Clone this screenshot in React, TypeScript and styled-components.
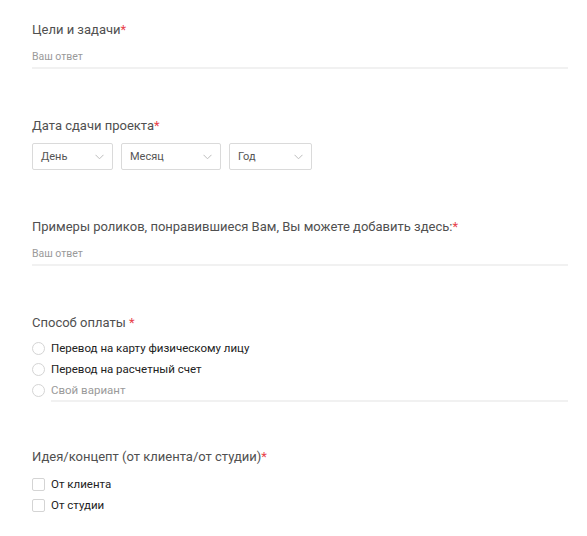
import React from "react";
import styled, {createGlobalStyle} from "styled-components";

const Global = createGlobalStyle`
  html, body {
    margin: 0;
    background: #fff;
  }
  body {
    font-family: Roboto, "Noto Sans", "Liberation Sans", sans-serif;
  }
`;

const Form = styled.div`
  padding: 20px 19px 0 32px;
`;

const Question = styled.div`
  margin-bottom: 47px;
  &:last-child {
    margin-bottom: 0;
  }
`;

const Label = styled.div<{ $gap?: number }>`
  font-size: 13px;
  line-height: 20px;
  color: #505050;
  margin-bottom: ${p => p.$gap ?? 7}px;
`;

const Star = styled.span`
  color: #e8424a;
`;

const TextLine = styled.div`
  font-size: 10.5px;
  line-height: 20px;
  height: 20px;
  color: #9a9a9a;
  border-bottom: 2px solid #f1f1f1;
`;

const SelectRow = styled.div`
  display: flex;
  gap: 8px;
`;

const Select = styled.div<{ $w: number }>`
  box-sizing: border-box;
  width: ${p => p.$w}px;
  height: 27px;
  border: 1px solid #dadada;
  border-radius: 2px;
  display: flex;
  align-items: center;
  justify-content: space-between;
  padding: 0 8px 0 8px;
  font-size: 11px;
  color: #555;
`;

const OptionList = styled.div`
  display: flex;
  flex-direction: column;
  gap: 1px;
`;

const Option = styled.div<{ $other?: boolean }>`
  display: flex;
  align-items: center;
  height: 20px;
  font-size: 11.5px;
  color: #222;
  ${p => p.$other && `
    color: #9a9a9a;
  `}
`;

const Radio = styled.span`
  box-sizing: border-box;
  width: 13px;
  height: 13px;
  border: 1px solid #d4d4d4;
  border-radius: 50%;
  margin-right: 6px;
  flex-shrink: 0;
`;

const Check = styled.span`
  box-sizing: border-box;
  width: 13px;
  height: 13px;
  border: 1px solid #d4d4d4;
  border-radius: 2px;
  margin-right: 6px;
  flex-shrink: 0;
`;

const OtherText = styled.div`
  flex: 1;
  line-height: 20px;
  border-bottom: 2px solid #f1f1f1;
  height: 20px;
  margin-top: 2px;
`;

function Chevron() {
    return <svg width="9" height="6" viewBox="0 0 9 6">
        <path d="M0.5 0.8 L4.5 4.8 L8.5 0.8" fill="none" stroke="#bdbdbd" strokeWidth="1"/>
    </svg>;
}

export default function App() {
    return (
        <Form>
            <Global/>
            <Question>
                <Label>Цели и задачи<Star>*</Star></Label>
                <TextLine>Ваш ответ</TextLine>
            </Question>
            <Question>
                <Label>Дата сдачи проекта<Star>*</Star></Label>
                <SelectRow>
                    <Select $w={81}>День<Chevron/></Select>
                    <Select $w={100}>Месяц<Chevron/></Select>
                    <Select $w={83}>Год<Chevron/></Select>
                </SelectRow>
            </Question>
            <Question>
                <Label>Примеры роликов, понравившиеся Вам, Вы можете добавить здесь:<Star>*</Star></Label>
                <TextLine>Ваш ответ</TextLine>
            </Question>
            <Question>
                <Label $gap={5}>Способ оплаты <Star>*</Star></Label>
                <OptionList>
                    <Option><Radio/>Перевод на карту физическому лицу</Option>
                    <Option><Radio/>Перевод на расчетный счет</Option>
                    <Option $other><Radio/><OtherText>Свой вариант</OtherText></Option>
                </OptionList>
            </Question>
            <Question>
                <Label>Идея/концепт (от клиента/от студии)<Star>*</Star></Label>
                <OptionList>
                    <Option><Check/>От клиента</Option>
                    <Option><Check/>От студии</Option>
                </OptionList>
            </Question>
        </Form>
    );
}
